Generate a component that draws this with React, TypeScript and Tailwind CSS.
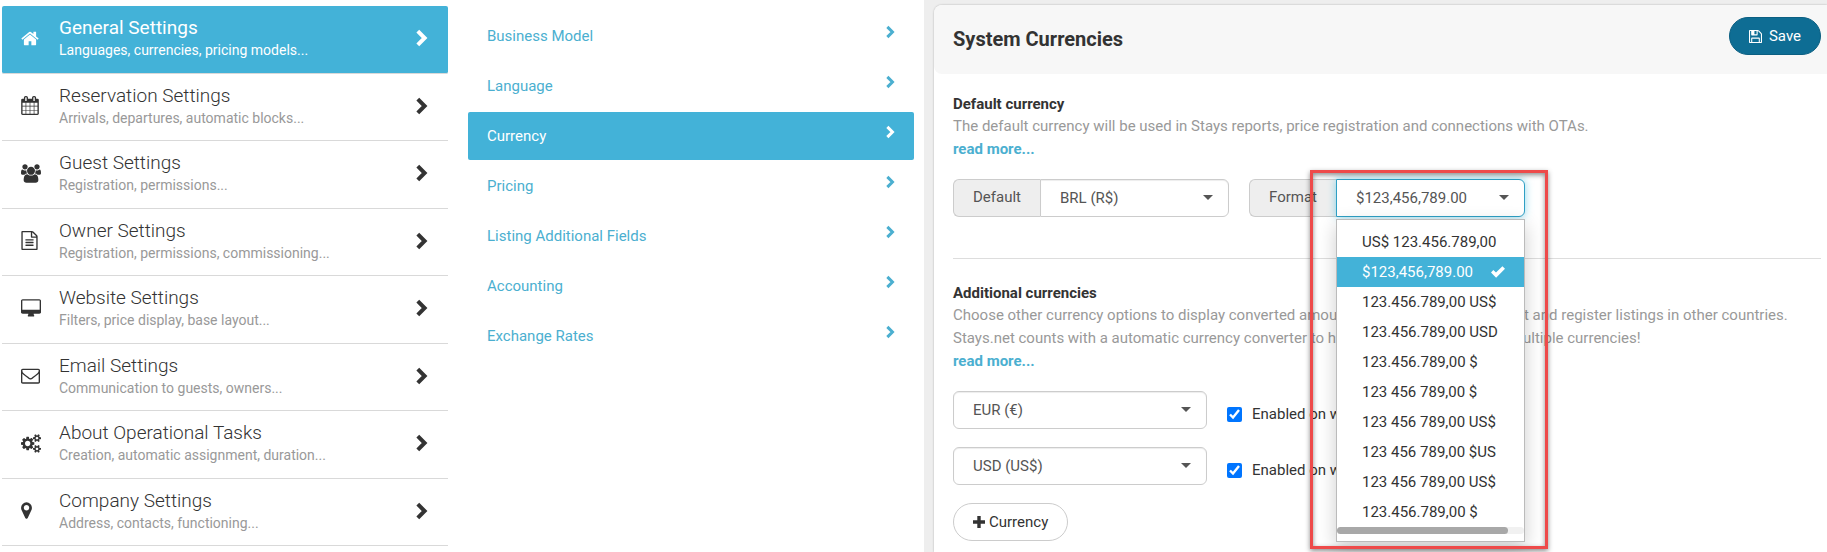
import type { ReactNode } from "react";
import clsx from "clsx";

type IconDef = { box: string; w: string; d: string };

const ICONS: Record<string, IconDef> = {
  home: {
    box: "64 0 1664 1792",
    w: "w-[18px]",
    d: "M1472 992v480q0 26-19 45t-45 19h-384v-384h-256v384h-384q-26 0-45-19t-19-45v-480q0-1 .5-3t.5-3l575-474 575 474q1 2 1 6zm223-69l-62 74q-8 9-21 11h-3q-13 0-21-7l-692-577-692 577q-12 8-24 7-13-2-21-11l-62-74q-8-10-7-23.5t11-21.5l719-599q32-26 76-26t76 26l244 204v-195q0-14 9-23t23-9h192q14 0 23 9t9 23v408l219 182q10 8 11 21.5t-7 23.5z",
  },
  calendar: {
    box: "64 0 1664 1792",
    w: "w-[18px]",
    d: "M192 1664h288v-288h-288v288zm352 0h320v-288h-320v288zm-352-352h288v-320h-288v320zm352 0h320v-320h-320v320zm-352-384h288v-288h-288v288zm736 736h320v-288h-320v288zm-384-736h320v-288h-320v288zm768 736h288v-288h-288v288zm-384-352h320v-320h-320v320zm-352-864v-288q0-13-9.5-22.5t-22.5-9.5h-64q-13 0-22.5 9.5t-9.5 22.5v288q0 13 9.5 22.5t22.5 9.5h64q13 0 22.5-9.5t9.5-22.5zm736 864h288v-320h-288v320zm-384-384h320v-288h-320v288zm384 0h288v-288h-288v288zm32-480v-288q0-13-9.5-22.5t-22.5-9.5h-64q-13 0-22.5 9.5t-9.5 22.5v288q0 13 9.5 22.5t22.5 9.5h64q13 0 22.5-9.5t9.5-22.5zm384-64v1280q0 52-38 90t-90 38h-1408q-52 0-90-38t-38-90v-1280q0-52 38-90t90-38h128v-96q0-66 47-113t113-47h64q66 0 113 47t47 113v96h384v-96q0-66 47-113t113-47h64q66 0 113 47t47 113v96h128q52 0 90 38t38 90z",
  },
  users: {
    box: "0 0 1920 1792",
    w: "w-5",
    d: "M593 896q-162 5-265 128h-134q-82 0-138-40.5t-56-118.5q0-353 124-353 6 0 43.5 21t97.5 42.5 119 21.5q67 0 133-23-5 37-5 66 0 139 81 256zm1071 637q0 120-73 189.5t-194 69.5h-874q-121 0-194-69.5t-73-189.5q0-53 3.5-103.5t14-109 26.5-108.5 43-97.5 62-81 85.5-53.5 111.5-20q10 0 43 21.5t73 48 107 48 135 21.5 135-21.5 107-48 73-48 43-21.5q61 0 111.5 20t85.5 53.5 62 81 43 97.5 26.5 108.5 14 109 3.5 103.5zm-1024-1277q0 106-75 181t-181 75-181-75-75-181 75-181 181-75 181 75 75 181zm704 384q0 159-112.5 271.5t-271.5 112.5-271.5-112.5-112.5-271.5 112.5-271.5 271.5-112.5 271.5 112.5 112.5 271.5zm576 225q0 78-56 118.5t-138 40.5h-134q-103-123-265-128 81-117 81-256 0-29-5-66 66 23 133 23 59 0 119-21.5t97.5-42.5 43.5-21q124 0 124 353zm-128-609q0 106-75 181t-181 75-181-75-75-181 75-181 181-75 181 75 75 181z",
  },
  file: {
    box: "128 0 1536 1792",
    w: "w-[17px]",
    d: "M1596 380q28 28 48 76t20 88v1152q0 40-28 68t-68 28h-1344q-40 0-68-28t-28-68v-1600q0-40 28-68t68-28h896q40 0 88 20t76 48zm-444-244v376h376q-10-29-22-41l-313-313q-12-12-41-22zm384 1528v-1024h-416q-40 0-68-28t-28-68v-416h-768v1536h1280zm-1024-864q0-14 9-23t23-9h704q14 0 23 9t9 23v64q0 14-9 23t-23 9h-704q-14 0-23-9t-9-23v-64zm736 224q14 0 23 9t9 23v64q0 14-9 23t-23 9h-704q-14 0-23-9t-9-23v-64q0-14 9-23t23-9h704zm0 256q14 0 23 9t9 23v64q0 14-9 23t-23 9h-704q-14 0-23-9t-9-23v-64q0-14 9-23t23-9h704z",
  },
  desktop: {
    box: "-64 0 1920 1792",
    w: "w-5",
    d: "M1728 992v-832q0-13-9.5-22.5t-22.5-9.5h-1600q-13 0-22.5 9.5t-9.5 22.5v832q0 13 9.5 22.5t22.5 9.5h1600q13 0 22.5-9.5t9.5-22.5zm128-832v1088q0 66-47 113t-113 47h-544q0 37 16 77.5t32 71 16 43.5q0 26-19 45t-45 19h-512q-26 0-45-19t-19-45q0-14 16-44t32-70 16-78h-544q-66 0-113-47t-47-113v-1088q0-66 47-113t113-47h1600q66 0 113 47t47 113z",
  },
  envelope: {
    box: "0 0 1792 1792",
    w: "w-[19px]",
    d: "M1664 1504v-768q-32 36-69 66-268 206-426 338-51 43-83 67t-86.5 48.5-102.5 24.5h-2q-48 0-102.5-24.5t-86.5-48.5-83-67q-158-132-426-338-37-30-69-66v768q0 13 9.5 22.5t22.5 9.5h1472q13 0 22.5-9.5t9.5-22.5zm0-1051v-24.5l-.5-13-3-12.5-5.5-9-9-7.5-14-2.5h-1472q-13 0-22.5 9.5t-9.5 22.5q0 168 147 284 193 152 401 317 6 5 35 29.5t46 37.5 44.5 31.5 50.5 27.5 43 9h2q20 0 43-9t50.5-27.5 44.5-31.5 46-37.5 35-29.5q208-165 401-317 54-43 100.5-115.5t46.5-131.5zm128-37v1088q0 66-47 113t-113 47h-1472q-66 0-113-47t-47-113v-1088q0-66 47-113t113-47h1472q66 0 113 47t47 113z",
  },
  cogs: {
    box: "0 0 1920 1792",
    w: "w-5",
    d: "M896 896q0-106-75-181t-181-75-181 75-75 181 75 181 181 75 181-75 75-181zm768 512q0-52-38-90t-90-38-90 38-38 90q0 53 37.5 90.5t90.5 37.5 90.5-37.5 37.5-90.5zm0-1024q0-52-38-90t-90-38-90 38-38 90q0 53 37.5 90.5t90.5 37.5 90.5-37.5 37.5-90.5zm-384 421v185q0 10-7 19.5t-16 10.5l-155 24q-11 35-32 76 34 48 90 115 7 11 7 20 0 12-7 19-23 30-82.5 89.5t-78.5 59.5q-11 0-21-7l-115-90q-37 19-77 31-11 108-23 155-7 24-30 24h-186q-11 0-20-7.5t-10-17.5l-23-153q-34-10-75-31l-118 89q-7 7-20 7-11 0-21-8-144-133-144-160 0-9 7-19 10-14 41-53t47-61q-23-44-35-82l-152-24q-10-1-17-9.5t-7-19.5v-185q0-10 7-19.5t16-10.5l155-24q11-35 32-76-34-48-90-115-7-11-7-20 0-12 7-20 22-30 82-89t79-59q11 0 21 7l115 90q34-18 77-32 11-108 23-154 7-24 30-24h186q11 0 20 7.5t10 17.5l23 153q34 10 75 31l118-89q8-7 20-7 11 0 21 8 144 133 144 160 0 8-7 19-12 16-42 54t-45 60q23 48 34 82l152 23q10 2 17 10.5t7 19.5zm640 533v140q0 16-149 31-12 27-30 52 51 113 51 138 0 4-4 7-122 71-124 71-8 0-46-47t-52-68q-20 2-30 2t-30-2q-14 21-52 68t-46 47q-2 0-124-71-4-3-4-7 0-25 51-138-18-25-30-52-149-15-149-31v-140q0-16 149-31 13-29 30-52-51-113-51-138 0-4 4-7 4-2 35-20t59-34 30-16q8 0 46 46.5t52 67.5q20-2 30-2t30 2q51-71 92-112l6-2q4 0 124 70 4 3 4 7 0 25-51 138 17 23 30 52 149 15 149 31zm0-1024v140q0 16-149 31-12 27-30 52 51 113 51 138 0 4-4 7-122 71-124 71-8 0-46-47t-52-68q-20 2-30 2t-30-2q-14 21-52 68t-46 47q-2 0-124-71-4-3-4-7 0-25 51-138-18-25-30-52-149-15-149-31v-140q0-16 149-31 13-29 30-52-51-113-51-138 0-4 4-7 4-2 35-20t59-34 30-16q8 0 46 46.5t52 67.5q20-2 30-2t30 2q51-71 92-112l6-2q4 0 124 70 4 3 4 7 0 25-51 138 17 23 30 52 149 15 149 31z",
  },
  marker: {
    box: "384 0 1024 1792",
    w: "w-[11px]",
    d: "M1152 640q0-106-75-181t-181-75-181 75-75 181 75 181 181 75 181-75 75-181zm256 0q0 109-33 179l-364 774q-16 33-47.5 52t-67.5 19-67.5-19-46.5-52l-365-774q-33-70-33-179 0-212 150-362t362-150 362 150 150 362z",
  },
};

const SECTIONS = [
  { icon: "home", title: "General Settings", text: "Languages, currencies, pricing models..." },
  { icon: "calendar", title: "Reservation Settings", text: "Arrivals, departures, automatic blocks..." },
  { icon: "users", title: "Guest Settings", text: "Registration, permissions..." },
  { icon: "file", title: "Owner Settings", text: "Registration, permissions, commissioning..." },
  { icon: "desktop", title: "Website Settings", text: "Filters, price display, base layout..." },
  { icon: "envelope", title: "Email Settings", text: "Communication to guests, owners..." },
  { icon: "cogs", title: "About Operational Tasks", text: "Creation, automatic assignment, duration..." },
  { icon: "marker", title: "Company Settings", text: "Address, contacts, functioning..." },
];

const PAGES = [
  "Business Model",
  "Language",
  "Currency",
  "Pricing",
  "Listing Additional Fields",
  "Accounting",
  "Exchange Rates",
];

const FORMATS = [
  "US$ 123.456.789,00",
  "$123,456,789.00",
  "123.456.789,00 US$",
  "123.456.789,00 USD",
  "123.456.789,00 $",
  "123 456 789,00 $",
  "123 456 789,00 US$",
  "123 456 789,00 $US",
  "123 456 789,00 US$",
  "123.456.789,00 $",
];

const CURRENCIES = ["EUR (€)", "USD (US$)"];

function Chevron({ className }: { className: string }) {
  return (
    <svg
      viewBox="0 0 12 18"
      fill="none"
      stroke="currentColor"
      strokeWidth="4"
      className={className}
      aria-hidden="true"
    >
      <path d="M1.800 2.200 8.600 9l-6.800 6.800" />
    </svg>
  );
}

function Caret() {
  return (
    <svg
      viewBox="0 0 10 5"
      fill="#555"
      className="pointer-events-none absolute top-4 right-4 h-[5px] w-[10px]"
      aria-hidden="true"
    >
      <path d="M0 0h10L5 5z" />
    </svg>
  );
}

function SectionLink({ icon, title, text, active }: { icon: string; title: string; text: string; active: boolean }) {
  const { box, w, d } = ICONS[icon];
  return (
    <a
      href="#"
      className={clsx(
        "flex items-center border-b border-[#d9d9d9] pr-5 pb-[2px] pl-[19px]",
        active ? "rounded-xs bg-[#43b2d8] text-white" : "text-[#333]"
      )}
    >
      <span className="w-[38px] shrink-0">
        <svg viewBox={box} fill="currentColor" className={clsx("h-[19px]", w)} aria-hidden="true">
          <path d={d} />
        </svg>
      </span>
      <span className="min-w-0 flex-1">
        <span className={clsx("block text-[19px] leading-6", active ? "font-normal" : "font-light")}>{title}</span>
        <span className={clsx("block text-sm leading-5", active ? "text-white" : "text-[#999]")}>{text}</span>
      </span>
      <Chevron className="h-[18px] w-3" />
    </a>
  );
}

function ReadMore() {
  return (
    <a href="#" className="block font-bold text-[#4bafd0]">
      read more...
    </a>
  );
}

function Addon({ htmlFor, children }: { htmlFor: string; children: ReactNode }) {
  return (
    <label
      htmlFor={htmlFor}
      className="flex w-[87px] items-center justify-center rounded-l-md border border-r-0 border-[#ccc] bg-[#eee] pb-[2px] text-[#555]"
    >
      {children}
    </label>
  );
}

function FormatMenu() {
  return (
    <div className="absolute top-10 left-0 w-full border border-[#bbb] bg-white py-[7px] shadow-[0_6px_18px_rgba(0,0,0,0.2)]">
      <ul>
        {FORMATS.map((format, i) => (
          <li
            key={i}
            className={clsx(
              "flex h-[30px] items-center justify-between pr-[19px] pl-[25px] whitespace-nowrap",
              i === 1 ? "bg-[#43b2d8] text-white" : "text-[#333]"
            )}
          >
            {format}
            {i === 1 && (
              <svg viewBox="0 0 14 12" fill="currentColor" className="h-3 w-[14px]" aria-hidden="true">
                <path d="M0 6.500 2.300 4.100 5 6.600 11.400.3 14 2.700 5.100 11.700z" />
              </svg>
            )}
          </li>
        ))}
      </ul>
      <div className="h-[7px] rounded-full bg-[#f1f1f1]">
        <div className="h-full w-11/12 rounded-full bg-[#a8a8a8]" />
      </div>
    </div>
  );
}

export default function App() {
  return (
    <div className="flex h-screen min-h-[552px] overflow-hidden bg-white font-[Roboto,sans-serif] text-[15px] leading-[22px] text-[#333]">
      <nav className="grid w-[448px] shrink-0 auto-rows-fr py-[6px] pl-[2px]">
        {SECTIONS.map((section, i) => (
          <SectionLink key={section.title} {...section} active={i === 0} />
        ))}
      </nav>

      <nav className="mr-[10px] ml-5 flex w-[446px] shrink-0 flex-col gap-[2px] pt-3">
        {PAGES.map((page) => {
          const active = page === "Currency";
          return (
            <a
              key={page}
              href="#"
              className={clsx(
                "flex h-12 items-center justify-between rounded-xs px-[19px]",
                active ? "bg-[#43b2d8] text-white" : "text-[#4bafd0]"
              )}
            >
              {page}
              <Chevron className="mb-2 h-[14px] w-[9px]" />
            </a>
          );
        })}
      </nav>

      <main className="min-w-0 flex-1 bg-[#eee] pt-[5px] pl-[10px]">
        <div className="h-full rounded-tl-lg bg-white shadow-[0_0_2px_rgba(0,0,0,0.3)]">
          <header className="flex h-[69px] items-start justify-between rounded-l-lg bg-[#f7f7f7] pt-3 pr-[6px] pl-[19px]">
            <h1 className="pt-2 text-xl font-bold">System Currencies</h1>
            <button
              type="button"
              className="flex h-[38px] w-[92px] items-center justify-center gap-[7px] rounded-full border border-[#0b5f82] bg-[#0e6d94] text-white"
            >
              <svg viewBox="128 128 1536 1536" fill="currentColor" className="h-[13px] w-[13px]" aria-hidden="true">
                <path d="M512 1536h768v-384h-768v384zm896 0h128v-896q0-14-10-38.5t-20-34.5l-281-281q-10-10-34-20t-39-10v416q0 40-28 68t-68 28h-576q-40 0-68-28t-28-68v-416h-128v1280h128v-416q0-40 28-68t68-28h832q40 0 68 28t28 68v416zm-384-928v-320q0-13-9.500-22.500t-22.500-9.500h-192q-13 0-22.500 9.500t-9.500 22.500v320q0 13 9.500 22.500t22.500 9.500h192q13 0 22.500-9.500t9.500-22.500zm640 32v928q0 40-28 68t-68 28h-1344q-40 0-68-28t-28-68v-1344q0-40 28-68t68-28h928q40 0 88 20t76 48l280 280q28 28 48 76t20 88z" />
              </svg>
              Save
            </button>
          </header>

          <div className="pt-[19px] pr-[6px] pl-[19px]">
            <section className="border-b border-[#ddd] pb-[41px]">
              <h2 className="font-bold">Default currency</h2>
              <p className="leading-[23px] text-[#999]">
                The default currency will be used in Stays reports, price registration and connections with OTAs.
              </p>
              <ReadMore />
              <div className="mt-[19px] flex gap-5">
                <div className="flex h-[38px] w-[276px]">
                  <Addon htmlFor="default-currency">Default</Addon>
                  <div className="relative flex-1">
                    <select
                      id="default-currency"
                      className="h-full w-full appearance-none rounded-r-md border border-[#ccc] bg-white pl-[19px] text-[#555] shadow-[inset_0_1px_1px_rgba(0,0,0,0.075)]"
                    >
                      <option>BRL (R$)</option>
                    </select>
                    <Caret />
                  </div>
                </div>

                <div className="relative flex h-[38px] w-[276px]">
                  <Addon htmlFor="currency-format">Format</Addon>
                  <div className="relative z-10 flex-1">
                    <select
                      id="currency-format"
                      className="h-full w-full appearance-none rounded-r-md border border-[#2f9fc4] bg-white pl-[19px] text-[#555] shadow-[0_0_8px_rgba(67,190,225,0.6)]"
                    >
                      <option>$123,456,789.00</option>
                    </select>
                    <Caret />
                    <FormatMenu />
                  </div>
                  {/* highlight frame around the open format picker */}
                  <div className="pointer-events-none absolute -top-[9px] -right-[23px] z-20 h-[379px] w-[238px] border-[3px] border-[#ee4a4a] shadow-[0_2px_5px_rgba(0,0,0,0.45),inset_0_2px_5px_rgba(0,0,0,0.45)]" />
                </div>
              </div>
            </section>

            <section className="pt-[23px]">
              <h2 className="font-bold">Additional currencies</h2>
              <p className="leading-[23px] text-[#999]">
                Choose other currency options to display converted amounts on your website, contract and register
                listings in other countries.
                <br />
                Stays.net counts with a automatic currency converter to help you manage pricing in multiple currencies!
              </p>
              <ReadMore />
              <div className="mt-[19px] flex flex-col gap-[18px]">
                {CURRENCIES.map((currency) => (
                  <div key={currency} className="flex h-[38px] items-center gap-5">
                    <div className="relative h-full w-[254px]">
                      <select
                        aria-label="Additional currency"
                        className="h-full w-full appearance-none rounded-md border border-[#ccc] bg-white pl-[19px] text-[#555] shadow-[inset_0_1px_1px_rgba(0,0,0,0.075)]"
                      >
                        <option>{currency}</option>
                      </select>
                      <Caret />
                    </div>
                    <label className="flex items-center gap-[10px] pt-2">
                      <input type="checkbox" defaultChecked className="h-[15px] w-[15px] accent-[#0075ff]" />
                      Enabled on website
                    </label>
                  </div>
                ))}
              </div>
              <button
                type="button"
                className="mt-[18px] flex h-[38px] items-center gap-1 rounded-full border border-[#ccc] px-[19px]"
              >
                <svg viewBox="0 0 12 12" fill="currentColor" className="h-3 w-3" aria-hidden="true">
                  <path d="M4.300 0h3.400v4.300H12v3.400H7.700V12H4.300V7.700H0V4.300h4.300z" />
                </svg>
                Currency
              </button>
            </section>
          </div>
        </div>
      </main>
    </div>
  );
}
